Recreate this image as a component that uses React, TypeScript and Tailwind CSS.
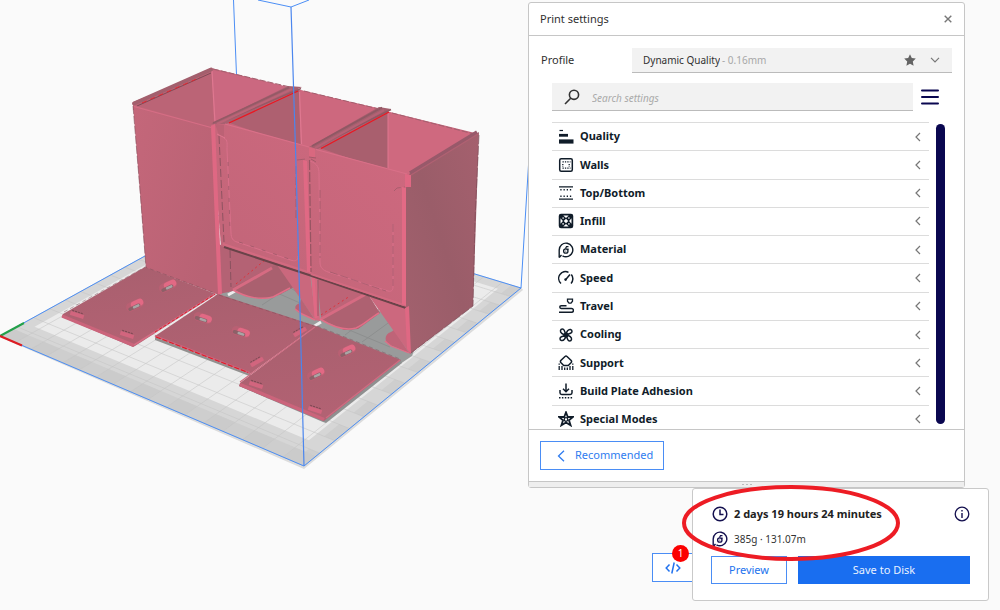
import { useState, type ReactNode } from "react";

type Point = [number, number];

/* Corners of the build plate in view space: left, front, right, back. */
const CORNERS: Point[] = [
  [0, 336],
  [304, 466],
  [521, 288],
  [241, 203],
];

/* Perspective map from the unit square to the plate. */
function project(u: number, v: number): Point {
  const [[x0, y0], [x1, y1], [x2, y2], [x3, y3]] = CORNERS;
  const dx1 = x1 - x2;
  const dx2 = x3 - x2;
  const dy1 = y1 - y2;
  const dy2 = y3 - y2;
  const sx = x0 - x1 + x2 - x3;
  const sy = y0 - y1 + y2 - y3;
  const det = dx1 * dy2 - dx2 * dy1;
  const g = (sx * dy2 - dx2 * sy) / det;
  const h = (dx1 * sy - sx * dy1) / det;
  const w = g * u + h * v + 1;
  return [
    ((x1 - x0 + g * x1) * u + (x3 - x0 + h * x3) * v + x0) / w,
    ((y1 - y0 + g * y1) * u + (y3 - y0 + h * y3) * v + y0) / w,
  ];
}

function quad(u0: number, v0: number, u1: number, v1: number): string {
  return [project(u0, v0), project(u1, v0), project(u1, v1), project(u0, v1)]
    .map((p) => p.join(","))
    .join(" ");
}

const CELLS = 17;
const STEPS = Array.from({ length: CELLS + 1 }, (_, i) => i / CELLS);

function BuildPlate() {
  return (
    <g>
      <polygon points="0,337 304,469 523,290 521,287 304,464 0,335" fill="#dcdcdc" />
      <polygon points={quad(0, 0, 1, 1)} fill="#d6d6d6" />
      {STEPS.slice(0, -1).map((s, i) =>
        i % 2 === 0 ? (
          <g key={s} fill="#cecece">
            <polygon points={quad(s, 0, s + 1 / CELLS, 0.045)} />
            <polygon points={quad(0.97, s, 1, s + 1 / CELLS)} />
          </g>
        ) : null,
      )}
      <polygon points={quad(0, 0, 1, 0.045)} fill="#cacaca" fillOpacity="0.7" />
      <polygon points={quad(0.04, 0.085, 0.95, 0.96)} fill="#ebebeb" />
      {STEPS.map((s) => {
        const [ax, ay] = project(s, 0);
        const [bx, by] = project(s, 1);
        const [cx, cy] = project(0, s);
        const [dx, dy] = project(1, s);
        return (
          <g key={s} stroke="#c4c4c4" strokeOpacity="0.55" strokeWidth="1">
            <line x1={ax} y1={ay} x2={bx} y2={by} />
            <line x1={cx} y1={cy} x2={dx} y2={dy} />
          </g>
        );
      })}
      <polygon points={quad(0, 0, 1, 1)} fill="none" stroke="#4b8ef5" strokeWidth="1" />
      <path d="M0 336 24 323" stroke="#23a04a" strokeWidth="2" />
      <path d="M0 336 22 345.500" stroke="#dd1c22" strokeWidth="2.200" />
    </g>
  );
}

function Slot({ x, y, flip = false }: { x: number; y: number; flip?: boolean }) {
  return (
    <g transform={`translate(${x} ${y}) rotate(${flip ? 18 : -25})`}>
      <rect x="-9.500" y="-4.500" width="19" height="9" rx="4.500" fill="#b96073" />
      <rect x="-4" y="-4" width="13" height="7" rx="3.500" fill="#e26984" />
      <rect x="-8" y="0" width="13" height="3.500" rx="1.700" fill="#8d6068" />
      <rect x="-3" y="0.500" width="7" height="2.500" rx="1" fill="#a9a5a5" />
    </g>
  );
}

function Clip({ x, y, flip = false }: { x: number; y: number; flip?: boolean }) {
  return (
    <g transform={`translate(${x} ${y}) rotate(${flip ? -30 : 18})`}>
      <rect x="-7" y="-2" width="14" height="4" fill="#d2657e" />
      <path d="M-6-3H6" stroke="#7d4753" strokeWidth="1" strokeDasharray="2 1" />
    </g>
  );
}

function Scene() {
  return (
    <svg
      viewBox="0 0 530 480"
      className="pointer-events-none absolute left-0 top-0 w-[530px]"
      fill="none"
      role="img"
      aria-label="Model on the build plate"
    >
      <defs>
        <linearGradient id="side" x1="0" y1="0" x2="1" y2="0.6">
          <stop offset="0" stopColor="#c4677a" />
          <stop offset="1" stopColor="#b96274" />
        </linearGradient>
        <linearGradient id="front" x1="1" y1="0" x2="0" y2="1">
          <stop offset="0" stopColor="#cf697f" />
          <stop offset="1" stopColor="#c06578" />
        </linearGradient>
        <linearGradient id="end" x1="0" y1="1" x2="1" y2="0">
          <stop offset="0" stopColor="#a3616e" />
          <stop offset="0.5" stopColor="#9a5d69" />
          <stop offset="1" stopColor="#a5606e" />
        </linearGradient>
        <linearGradient id="lid" x1="0" y1="0" x2="0.3" y2="1">
          <stop offset="0" stopColor="#a85f6e" />
          <stop offset="1" stopColor="#b26273" />
        </linearGradient>
      </defs>

      <BuildPlate />
      <g stroke="#4b8ef5" strokeWidth="1">
        <path d="M233.500 0 236.500 75M258 0 291 7 309 0M528.500 165 521 288" />
      </g>

      {/* Shadow on the plate */}
      <polygon points="215,296 231,283 300,264 420,335 412,356 400,364" fill="#999b9b" />
      <g stroke="#8d8f8f" strokeWidth="1">
        <path d="M275 292 300 303M286 285 300 294M330 322 390 347M345 335 385 305M362 342 395 318M262 305 300 280" />
      </g>
      <path d="M228 295 235 291M313 327 321 322" stroke="#ededed" strokeWidth="3" />

      {/* Interior walls */}
      <polygon points="133,103 211,68 475,133 409,178 316,154 133,110" fill="#c5667b" />
      <polygon points="133,102 212,70 214,128 211,130 133,108" fill="#bb6476" />
      <polygon points="212,70 295,89 215,126" fill="#cb6880" />
      <path d="M212 71 215 123" stroke="#df7890" strokeWidth="1.200" />
      <polygon points="227,122 299,90 301,148" fill="#ae6070" />
      <polygon points="299,90 382,109 311,150 301,148" fill="#cd687e" />
      <path d="M299.500 92 301.500 144" stroke="#df7890" strokeWidth="1.200" />
      <polygon points="320,148 388,111 388,172" fill="#a95f6e" />
      <polygon points="388,112 475,134 409,177 388,172" fill="#cf697f" />
      <path d="M388 113 388 168" stroke="#df7890" strokeWidth="1" />

      {/* Rails */}
      <path d="M134 103.500 211 69.500" stroke="#a35f6d" strokeWidth="4" strokeLinecap="round" />
      <path d="M137 106 211 73" stroke="#7d4b56" strokeWidth="1" />
      <path d="M142 103 200 77.500" stroke="#e02630" strokeWidth="1" strokeDasharray="5 4" />
      <polygon points="211,124 288,86 302,87 226,124" fill="#a76070" />
      <path d="M213 123 289 87.500M226 120 301 88.500" stroke="#945a66" strokeWidth="1.500" />
      <path d="M217 124 292 89" stroke="#bb6477" strokeWidth="2" />
      <path d="M229 123 298 91" stroke="#ec1620" strokeWidth="1.200" />
      <polygon points="309,147 379,107 391,109 318,149" fill="#a35f6d" />
      <path d="M312 146 382 107.500M320 145 391 109.500" stroke="#8f5864" strokeWidth="1.500" />
      <path d="M315 148 384 110" stroke="#b46275" strokeWidth="2" />
      <path d="M321 148.500 389 112" stroke="#ec1620" strokeWidth="1.200" />
      <path d="M213 69 290 87M304 91 379 109M392 113 474 134" stroke="#a35f6e" strokeWidth="1" strokeDasharray="6 2" />

      {/* Left container, side panel */}
      <polygon points="133,105 212,127 219,295 146,268" fill="url(#side)" />
      <path d="M133 106 140 190 146 267" stroke="#824f5a" strokeOpacity="0.6" strokeWidth="1" strokeDasharray="8 2" />
      <path d="M134 106.500 211 127.500" stroke="#d66e85" strokeWidth="1.200" />

      {/* Lower bays */}
      <polygon points="218,244 310,272 233,291 219,294" fill="#b46274" />
      <polygon points="232,288 277,264 294,287 279,295 262,299 245,296" fill="#aa606f" />
      <path d="M233 290 272 268" stroke="#d66b82" strokeWidth="3" />
      <path d="M233 290C247 298 262 300 273 297L290 288" stroke="#e26e87" strokeWidth="1.500" />
      <path d="M236 284 265 260" stroke="#df313a" strokeWidth="1" strokeDasharray="2 3" />
      <polygon points="277,265 310,274 316,321" fill="#ca687d" />
      <path d="M300 303C293 305 294 311 302 314L315 320 301 299Z" fill="#b86375" />
      <path d="M295 309 302 314 315 320" stroke="#e26e87" strokeWidth="1.500" />
      <polygon points="311,274 317,276 320,321 315,320" fill="#d56980" />
      <polygon points="317,277 370,296 321,318" fill="#bd6477" />
      <polygon points="320,319 368,294 380,313 358,329 344,330" fill="#ae6171" />
      <path d="M321 319 366 294" stroke="#d66b82" strokeWidth="3" />
      <path d="M320 319C333 327 346 331 356 328 364 325 370 318 379 313" stroke="#e26e87" strokeWidth="1.500" />
      <path d="M321 315 350 296" stroke="#df313a" strokeWidth="1" strokeDasharray="2 3" />
      <path d="M391 332C384 334 384 342 390 345L409 353 394 330Z" fill="#bf6478" />
      <path d="M385 341 391 346 409 353" stroke="#e26e87" strokeWidth="1.200" />
      <polygon points="369,296 409,307 410,354" fill="#cc687e" />

      {/* Front panels */}
      <polygon points="211,125 225,124 310,147 316,149 411,175 406,308 309,276 221,246" fill="url(#front)" />
      <path d="M225 124 309 147M316 149.500 407 174" stroke="#d97088" strokeWidth="1.200" />
      <path d="M224 247 309 275 406 308" stroke="#694349" strokeWidth="2" />
      <path d="M223 244 308 272M311 274 404 305" stroke="#d36a80" strokeWidth="2" />
      <path d="M224 138C228 140 227 144 227 150L231 233C231 238 233 241 237 242L292 260.500C296 261.500 298 260 298 256" stroke="#d9708a" strokeWidth="1" />
      <path d="M228 162 230 231M239 242 292 260" stroke="#8e5360" strokeOpacity="0.6" strokeWidth="1" strokeDasharray="4 8" />
      <path d="M310 161C318 164 319 168 319 174L320 262C320 268 323 270 328 272L388 291C392 292 393 290 393 286V224" stroke="#d9708a" strokeWidth="1" />
      <path
        d="M320 190V258M330 272 386 291M393 224V286M394 191 397 188 405 187M296 166V220M297 160 306 159"
        stroke="#8e5360"
        strokeOpacity="0.55"
        strokeWidth="1"
        strokeDasharray="8 3"
      />
      <polygon points="211,126 215,124 222,294 218,295" fill="#df6883" />
      <path d="M219 136 224 242M230 250 231 287" stroke="#774a55" strokeOpacity="0.7" strokeWidth="1" strokeDasharray="8 3" />
      <polygon points="215,124 224,125 224,137 219,135" fill="#bc6275" />
      <path d="M217 134 225 138" stroke="#df7890" strokeWidth="1" />
      <polygon points="309,147 315,149 315,158 309,157" fill="#d9687f" />
      <polygon points="303,160 307,161 311,273 307,272" fill="#e06984" />
      <path d="M309.500 160 311 272" stroke="#8b505d" strokeOpacity="0.8" strokeWidth="1.200" strokeDasharray="10 2" />
      <path d="M311 159 316 162M309 157 316 158" stroke="#a55a6a" strokeWidth="1" />
      <path d="M313 278 316 318" stroke="#e06984" strokeWidth="3" />
      <path d="M318 280V316" stroke="#9c5968" strokeWidth="1" />

      {/* Right end panel */}
      <polygon points="409,174 479,132 473,306 410,354 406,308 406,188" fill="url(#end)" />
      <path d="M410 173 477 132" stroke="#98596a" strokeWidth="3.500" />
      <path d="M411 175 478 134" stroke="#b06172" strokeWidth="1.300" />
      <polygon points="405,174 411,175 411,187 405,187" fill="#df6883" />
      <polygon points="402,187 406,188 406,306 402,304" fill="#e36a85" />
      <polygon points="405,308 409,306 411,354 407,349" fill="#df6883" />
      <path d="M479 135 475 220 473 306 411 353" stroke="#774853" strokeOpacity="0.6" strokeWidth="1" strokeDasharray="9 2" />

      {/* Lids */}
      <polygon points="155,337 250,374 252,377 155,340" fill="#92908f" />
      <polygon points="239,386 323,422 326,423 402,363 400,359" fill="#8f9090" />
      <polygon points="63,314 145,267 216,294 135,346 133,347 62,317" fill="url(#lid)" />
      <path d="M62 316 134 345.500" stroke="#cb647b" strokeWidth="3" />
      <path d="M134 345 215 294" stroke="#d56c83" strokeWidth="1.500" />
      <path d="M155 332 215 294" stroke="#dc1c28" strokeWidth="1" strokeDasharray="3 2" />
      <path d="M64 312 145 267 215 293" stroke="#7d4b56" strokeOpacity="0.45" strokeWidth="1" strokeDasharray="4 3" />
      <polygon points="155,336 218,294 316,326 250,374" fill="url(#lid)" />
      <path d="M155 336 250 373" stroke="#cb647b" strokeWidth="2" />
      <path d="M156 337 248 372.500" stroke="#e11b27" strokeWidth="1.100" strokeDasharray="5 2" />
      <path d="M219 295 317 327" stroke="#7d4b56" strokeOpacity="0.45" strokeWidth="1" strokeDasharray="4 3" />
      <polygon points="240,383 316,326 401,360 324,421 239,386" fill="url(#lid)" />
      <path d="M240 384.500 324 419.500" stroke="#cb647b" strokeWidth="3.500" />
      <path d="M240 382 315 327M326 418 400 360" stroke="#d06c82" strokeWidth="1.200" />
      <path d="M317 326 400 359" stroke="#7d4b56" strokeOpacity="0.45" strokeWidth="1" strokeDasharray="4 3" />
      <Slot x={168} y={286} />
      <Slot x={135} y={305} />
      <Slot x={203} y={318} flip />
      <Slot x={241} y={332} flip />
      <Slot x={347} y={351} />
      <Slot x={316} y={374} />
      <Clip x={77} y={315} />
      <Clip x={127} y={335} />
      <Clip x={257} y={362} flip />
      <Clip x={300} y={332} flip />
      <Clip x={256} y={385} />
      <Clip x={315} y={410} />

      <path d="M291 7 296 165 300 310 304 466" stroke="#4b86ee" strokeWidth="1.200" />
    </svg>
  );
}

function Icon({ children }: { children: ReactNode }) {
  return (
    <svg
      viewBox="0 0 16 16"
      className="size-4 shrink-0"
      fill="none"
      stroke="currentColor"
      strokeWidth="1.5"
      aria-hidden="true"
    >
      {children}
    </svg>
  );
}

function SpoolIcon() {
  return (
    <Icon>
      <path d="M1.200 15.500V8A6.800 6.800 0 1 1 4.500 13.800" strokeWidth="1.400" />
      <path d="M1.200 15.500 3.500 13" strokeWidth="1.400" />
      <circle cx="7.800" cy="9" r="2.200" strokeWidth="1.300" />
      <path d="M7.500 6.500 8.500 4.600 10.500 4.600M10 8V6.500" strokeWidth="1.200" />
      <circle cx="7.800" cy="9" r=".6" fill="currentColor" stroke="none" />
    </Icon>
  );
}

const SECTIONS: { name: string; icon: ReactNode }[] = [
  {
    name: "Quality",
    icon: (
      <Icon>
        <path d="M1.500 1.500h3.500" strokeWidth="1.200" />
        <path d="M1 6.300h9" strokeWidth="2.800" />
        <path d="M1 12.500h14.500" strokeWidth="4.200" />
      </Icon>
    ),
  },
  {
    name: "Walls",
    icon: (
      <Icon>
        <rect x="1.700" y="1.700" width="12.600" height="12.600" rx="1.500" />
        <path d="M4.500 4.800h8M4.500 11.200h8M4.800 7v3M11.200 7v3" strokeDasharray="1.300 1.100" strokeWidth="1.300" />
      </Icon>
    ),
  },
  {
    name: "Top/Bottom",
    icon: (
      <Icon>
        <path d="M1 1.800h14M1 14.200h14" strokeWidth="1.300" />
        <path d="M2.300 4.800h12M2.300 11.200h12" strokeDasharray="1.300 1.900" strokeWidth="1.600" />
      </Icon>
    ),
  },
  {
    name: "Infill",
    icon: (
      <Icon>
        <rect x="1.500" y="1.500" width="13" height="13" rx="1.500" fill="currentColor" />
        <g fill="#fff" stroke="none">
          <path d="M8 5.800 10.200 8 8 10.200 5.800 8ZM5.300 2.500h5.400L8 4.900ZM5.300 13.500h5.400L8 11.100ZM2.500 5.300v5.400L4.900 8ZM13.500 5.300v5.400L11.100 8Z" />
          <circle cx="5.100" cy="5.100" r=".8" />
          <circle cx="10.900" cy="5.100" r=".8" />
          <circle cx="5.100" cy="10.900" r=".8" />
          <circle cx="10.900" cy="10.900" r=".8" />
        </g>
      </Icon>
    ),
  },
  { name: "Material", icon: <SpoolIcon /> },
  {
    name: "Speed",
    icon: (
      <Icon>
        <path d="M3 13.500A6.800 6.800 0 0 1 10.500 2.300M13.300 4.500A6.800 6.800 0 0 1 13 13.500M8 9.200 12 4.500" />
        <circle cx="7.600" cy="9.600" r="1.300" fill="currentColor" stroke="none" />
      </Icon>
    ),
  },
  {
    name: "Travel",
    icon: (
      <Icon>
        <path d="M9.500 1.200h5v2l-1.500 2h-2l-1.500-2Z" strokeWidth="1.300" />
        <path d="M8.500 7.700H3.200a1.400 1.400 0 0 0 0 2.800H13.500a1.900 1.900 0 0 1 0 3.800H1" />
      </Icon>
    ),
  },
  {
    name: "Cooling",
    icon: (
      <Icon>
        <g strokeWidth="1.500">
          <path d="M8 8C4.500 7.800 2 5.500 2.500 3.500 3 1.500 5.500 1.500 6.300 3.500Z" />
          <path d="M8 8C8.200 4.500 10.500 2 12.500 2.500 14.500 3 14.500 5.500 12.500 6.300Z" />
          <path d="M8 8C11.500 8.200 14 10.500 13.500 12.500 13 14.500 10.500 14.500 9.700 12.500Z" />
          <path d="M8 8C7.800 11.500 5.500 14 3.500 13.500 1.500 13 1.500 10.500 3.500 9.700Z" />
        </g>
        <circle cx="8" cy="8" r="1.800" fill="currentColor" />
      </Icon>
    ),
  },
  {
    name: "Support",
    icon: (
      <Icon>
        <path d="M7 1.500Q8 .7 9 1.500L13.200 5.500Q14 6.500 13.200 7.500L10.300 10.500H5.700L2.800 7.500Q2 6.500 2.800 5.500Z" strokeWidth="1.500" />
        <path d="M1.200 8.500v1.300M1.200 11v4M4 11v4M6.700 12.500V15M9.300 12.500V15M12 11v4M14.800 8.500v1.300M14.800 11v4" strokeWidth="1.300" />
      </Icon>
    ),
  },
  {
    name: "Build Plate Adhesion",
    icon: (
      <Icon>
        <path d="M8 .5v8M5 5.800l3 3 3-3M2 7v2.800Q2 11.500 3.700 11.500h8.600Q14 11.500 14 9.800V7" />
        <path d="M1 14.700h14.500" strokeDasharray="1.500 1.400" strokeWidth="1.400" />
      </Icon>
    ),
  },
  {
    name: "Special Modes",
    icon: (
      <Icon>
        <path d="M8 1.300 9.800 6H15l-4 3.300 1.600 5L8 11.500l-4.600 2.800 1.600-5L1 6h5.200Z" strokeWidth="1.800" />
        <circle cx="8" cy="8.500" r="1.800" strokeWidth="1.300" />
      </Icon>
    ),
  },
];

function PrintSettings() {
  const [open, setOpen] = useState<string | null>(null);
  return (
    <section className="relative mr-[35px] w-[437px] max-w-full rounded-[3px] border border-[#c6c6c6] bg-white">
      <header className="flex h-[33px] items-center justify-between border-b border-[#c6c6c6] pr-3 pl-[11px]">
        <h1 className="text-[11px]">Print settings</h1>
        <button type="button" aria-label="Close" className="text-[#777]">
          <svg viewBox="0 0 8 8" className="size-2" stroke="currentColor" strokeWidth="1.400" aria-hidden="true">
            <path d="M.7.7 7.300 7.300M7.300.7.7 7.300" />
          </svg>
        </button>
      </header>

      <div className="mt-3 flex h-[25px] items-center justify-between pr-3 pl-3">
        <label htmlFor="profile" className="text-[11px]">
          Profile
        </label>
        <div className="flex h-[25px] w-80 items-center border-b border-[#bbb] bg-[#f2f2f2] pr-3 pl-[11px] text-[10px]">
          <select id="profile" className="field-sizing-content appearance-none bg-transparent outline-none">
            <option>Dynamic Quality</option>
          </select>
          <span className="ml-0.5 flex-1 text-[#a8a8a8]">- 0.16mm</span>
          <svg viewBox="0 0 12 12" className="size-3" fill="#646464" aria-hidden="true">
            <path d="M6 .3 7.800 4l4 .5-3 2.900.8 4.300L6 9.700l-3.600 2 .8-4.300-3-2.900 4-.5Z" />
          </svg>
          <svg viewBox="0 0 10 6" className="ml-3.5 h-1.5 w-2.5" fill="none" stroke="#777" strokeWidth="1.200" aria-hidden="true">
            <path d="M1 .8 5 4.800 9 .8" />
          </svg>
        </div>
      </div>

      <div className="mt-2.5 flex h-7 items-center gap-2 pr-[25px] pl-[23px]">
        <div className="flex h-7 flex-1 items-center gap-3 border-b border-[#bbb] bg-[#f2f2f2] pl-3">
          <svg viewBox="0 0 16 16" className="size-4" fill="none" stroke="#333" strokeWidth="1.600" aria-hidden="true">
            <circle cx="10" cy="5.800" r="4.600" />
            <path d="M6.700 9.200 1 15" />
          </svg>
          <input
            aria-label="Search settings"
            placeholder="Search settings"
            className="h-7 min-w-0 flex-1 bg-transparent pt-0.5 text-[10px] italic outline-none placeholder:text-[#aaa]"
          />
        </div>
        <button type="button" aria-label="Setting visibility" className="text-[#0a0750]">
          <svg viewBox="0 0 18 16" className="h-4 w-[18px]" stroke="currentColor" strokeWidth="2" strokeLinecap="round" aria-hidden="true">
            <path d="M1 1.500h16M1 8h16M1 14.500h16" />
          </svg>
        </button>
      </div>

      <div className="mt-[11px] flex h-[307px] gap-[7px] overflow-hidden pr-[19px] pl-[23px]">
        <ul className="grid h-[311px] flex-1 auto-rows-fr">
          {SECTIONS.map(({ name, icon }) => (
            <li key={name} className="border-t border-[#dcdcdc]">
              <button
                type="button"
                aria-expanded={open === name}
                onClick={() => setOpen(open === name ? null : name)}
                className="flex h-full w-full items-center gap-1.5 pr-2 pl-1.5 text-left text-[11px] font-bold text-[#101c29]"
              >
                {icon}
                <span className="flex-1">{name}</span>
                <svg viewBox="0 0 6 10" className="h-2.5 w-1.5" fill="none" stroke="#777" strokeWidth="1.200" aria-hidden="true">
                  <path d="M5 1 1 5l4 4" />
                </svg>
              </button>
            </li>
          ))}
        </ul>
        <div className="mt-0.5 h-[300px] w-[9px] rounded-full bg-[#0a0750]" />
      </div>

      <footer className="border-t border-[#c6c6c6]">
        <div className="flex py-[11px] pl-[11px]">
          <button
            type="button"
            className="flex h-[29px] items-center gap-2.5 border border-[#4a8df5] pr-2.5 pl-4 text-[11px] text-[#2f7cf0]"
          >
            <svg viewBox="0 0 8 12" className="h-3 w-2" fill="none" stroke="currentColor" strokeWidth="1.300" aria-hidden="true">
              <path d="M7 .7 1.500 6 7 11.300" />
            </svg>
            Recommended
          </button>
        </div>
        <div className="flex h-1.5 items-center justify-center gap-0.5 border-t border-[#c6c6c6] bg-[#eee]">
          <i className="h-px w-0.5 bg-[#bbb]" />
          <i className="h-px w-0.5 bg-[#bbb]" />
          <i className="h-px w-0.5 bg-[#bbb]" />
        </div>
      </footer>
    </section>
  );
}

function JobPanel() {
  return (
    <div className="relative mr-[11px] flex items-end">
      <button
        type="button"
        aria-label="Post-processing scripts"
        className="relative mb-[19px] flex h-[29px] w-10 items-center justify-center border border-r-0 border-[#4a8df5] bg-white text-[#2272ee]"
      >
        <svg viewBox="0 0 16 12" className="h-3 w-4" fill="none" stroke="currentColor" strokeWidth="1.500" aria-hidden="true">
          <path d="M4.500 2.500 1.200 6l3.300 3.500M11.500 2.500 14.800 6l-3.300 3.500M9.200.5 6.800 11.500" />
        </svg>
        <span className="absolute -top-[9px] left-[19px] flex size-[17px] items-center justify-center rounded-full bg-[#fb0000] text-[10px] text-white">
          1
        </span>
      </button>

      <section className="w-[297px] rounded-[3px] border border-[#c9c9c9] bg-white px-[18px] pt-4 pb-4">
        <div className="flex items-center gap-1.5 pl-px text-[#14104f]">
          <Icon>
            <circle cx="8" cy="8" r="6.800" />
            <path d="M8 3.500V8.500h3.500" />
          </Icon>
          <h2 className="flex-1 text-[11px] leading-[18px] font-bold text-[#222]">2 days 19 hours 24 minutes</h2>
          <button type="button" aria-label="Print details">
            <Icon>
              <circle cx="8" cy="8" r="6.800" strokeWidth="1.300" />
              <path d="M8 7v5M8 4v1.500" strokeWidth="1.400" />
            </Icon>
          </button>
        </div>
        <div className="mt-2 flex items-center gap-1.5 pl-px text-[#14104f]">
          <SpoolIcon />
          <p className="text-[10px] leading-4 text-[#333]">385g · 131.07m</p>
        </div>
        <div className="mt-[9px] flex gap-[11px]">
          <button type="button" className="h-7 w-[76px] border border-[#4a8df5] text-[11px] text-[#2272ee]">
            Preview
          </button>
          <button type="button" className="h-7 flex-1 bg-[#196ef0] text-[11px] text-[#e8f1ff]">
            Save to Disk
          </button>
        </div>
      </section>

      <svg
        viewBox="0 0 220 78"
        className="pointer-events-none absolute -top-1 left-[30px] h-[78px] w-[220px]"
        fill="none"
        stroke="#ed1c24"
        strokeWidth="4"
        aria-hidden="true"
      >
        <ellipse cx="109" cy="39" rx="107" ry="36" />
      </svg>
    </div>
  );
}

export default function App() {
  return (
    <main className="relative min-h-screen overflow-hidden bg-[#fafafa] pt-0.5 font-['Noto_Sans',sans-serif] text-[#303030]">
      <Scene />
      <div className="flex flex-col items-end">
        <PrintSettings />
        <JobPanel />
      </div>
    </main>
  );
}
